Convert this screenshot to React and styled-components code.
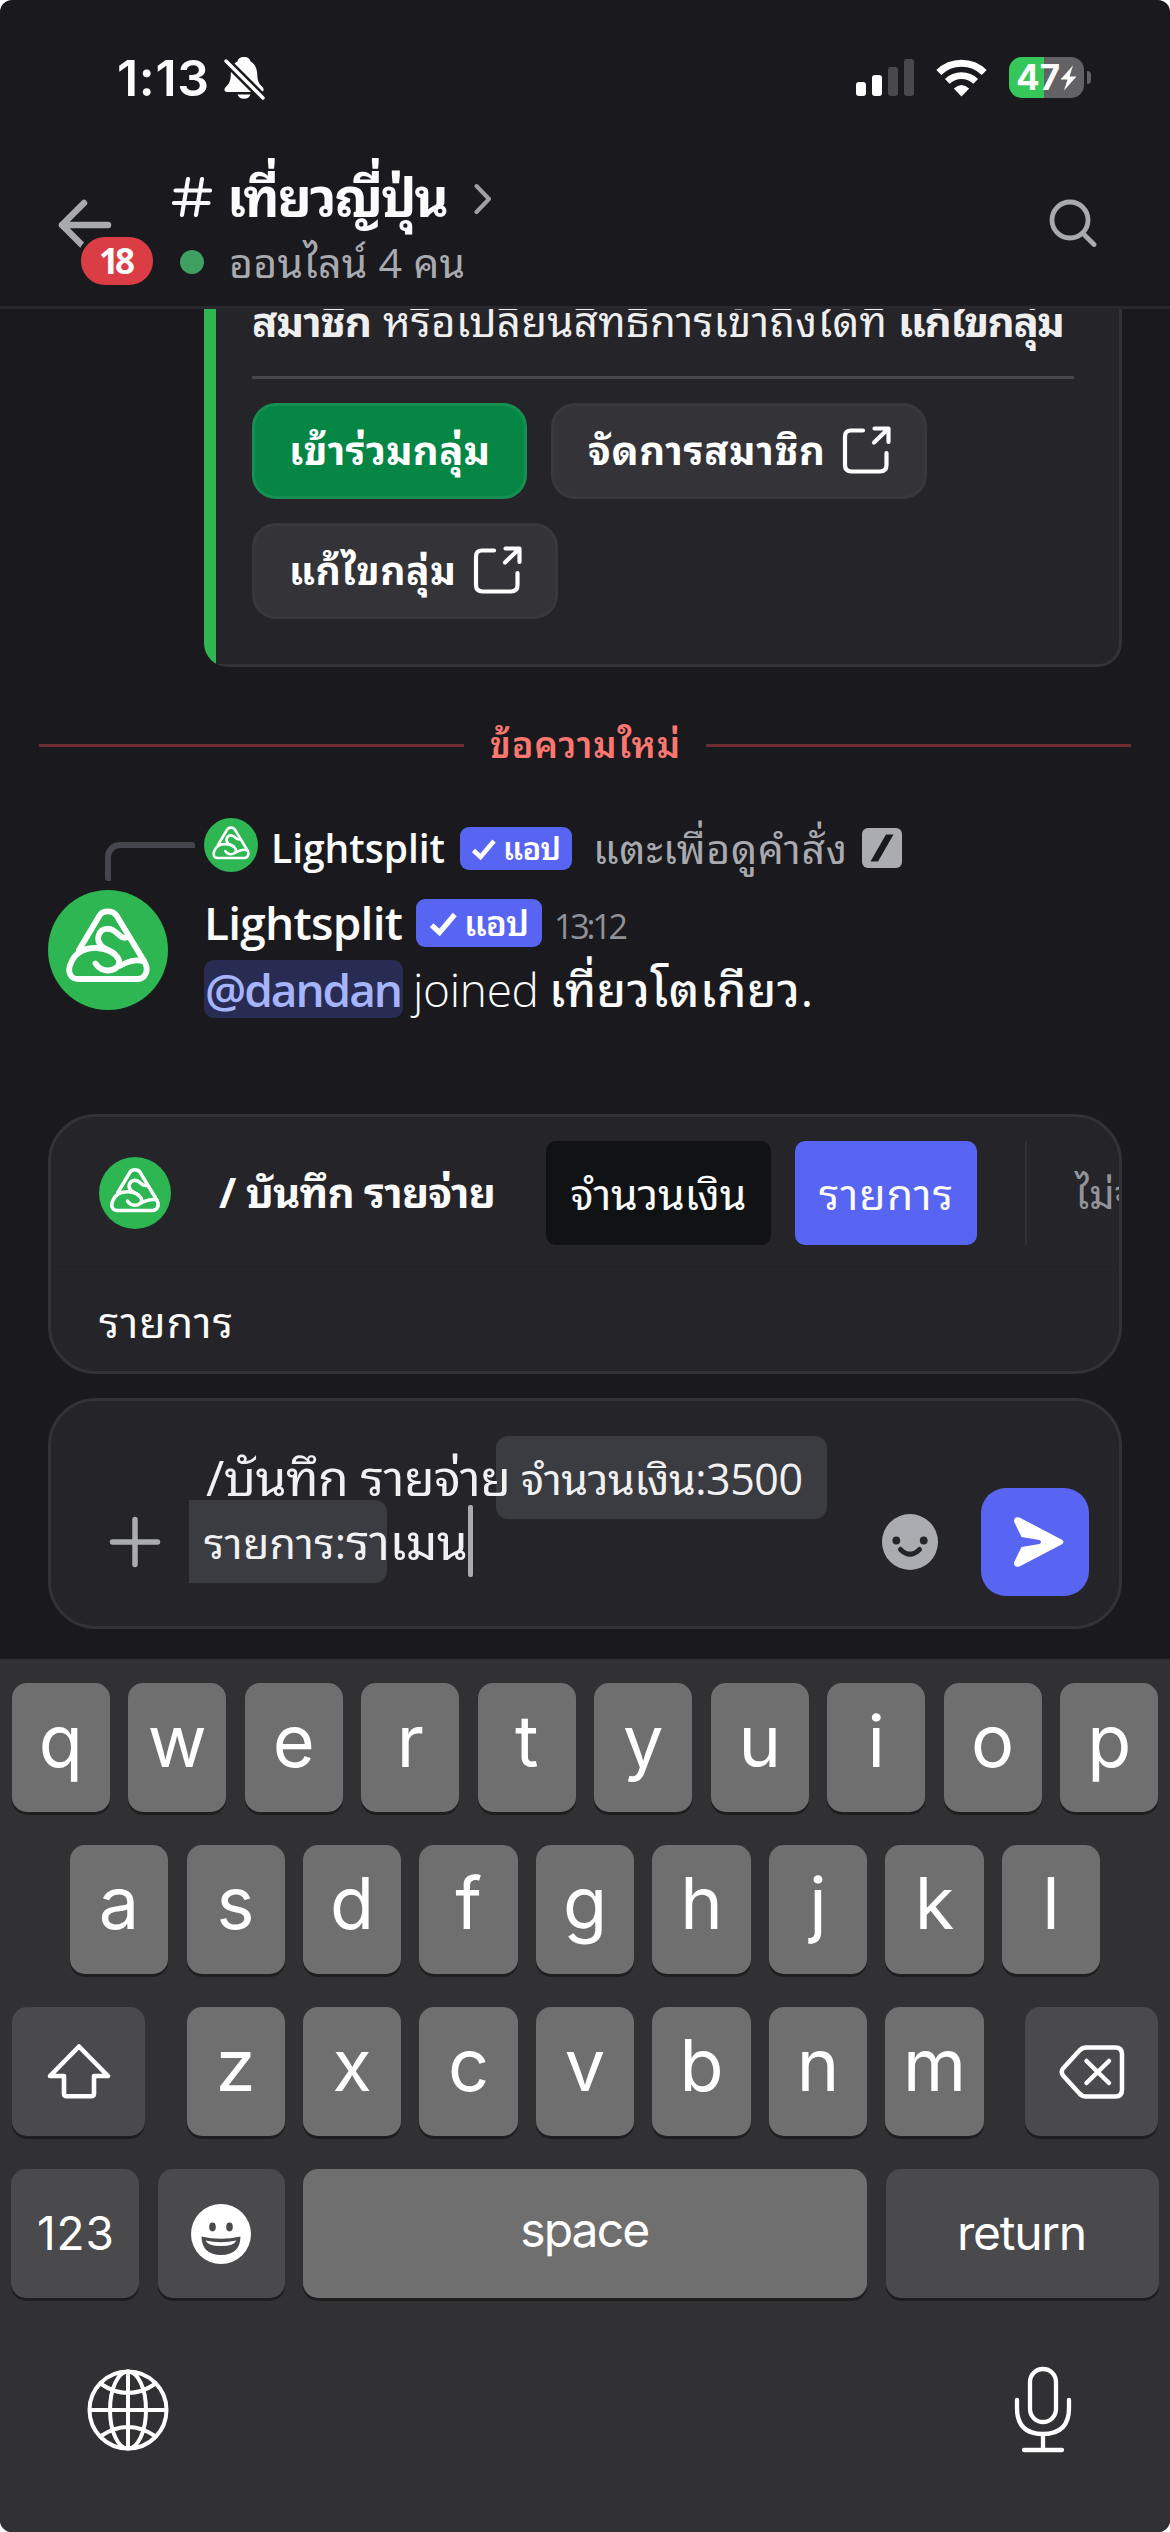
import React, { useLayoutEffect, useRef, useState } from "react";
import styled, { createGlobalStyle, css } from "styled-components";

const c = {
  bg: "#1a1a1e",
  panel: "#242429",
  line: "#323237",
  blurple: "#5865f2",
  text: "#fbfbfb",
  muted: "#a9aaaf",
  green: "#2db652",
};

const chatFont = `"Open Sans", "Noto Sans Thai Looped", "Loma", "Garuda", "Waree", "Umpush", "Noto Sans Thai", sans-serif`;
const systemFont = `Inter, "Noto Sans", sans-serif`;

const GlobalStyle = createGlobalStyle`
  *, *::before, *::after { box-sizing: border-box; }
  body { margin: 0; background: #fff; }
`;

const Screen = styled.main`
  width: 1170px;
  height: 2532px;
  display: flex;
  flex-direction: column;
  overflow: hidden;
  border-radius: 12px;
  background: ${c.bg};
  color: ${c.text};
  font-family: ${chatFont};
`;

const Label = styled.span`
  display: block;
  flex: none;
  white-space: nowrap;
  width: ${(p) => (p.$w ? `${p.$w}px` : "auto")};
  font-family: ${(p) => (p.$system ? systemFont : chatFont)};
  font-size: ${(p) => p.$size}px;
  font-weight: ${(p) => p.$weight || 400};
  line-height: ${(p) => p.$line || 60}px;
  color: ${(p) => p.$color || "inherit"};
  padding-top: ${(p) => p.$drop || 0}px;
  padding-bottom: ${(p) => p.$lift || 0}px;
  margin-left: ${(p) => p.$ml || 0}px;
`;

const Glyph = styled.span`
  display: flex;
  flex: none;
  margin-left: ${(p) => p.$ml || 0}px;
  padding-top: ${(p) => p.$drop || 0}px;
`;

/* Spreads a run of text evenly over a given width. */
function Text({ w, children, ...rest }) {
  const ref = useRef(null);
  const [spacing, setSpacing] = useState(0);
  useLayoutEffect(() => {
    if (!w) return;
    const el = ref.current;
    el.style.letterSpacing = "0px";
    const natural = el.getBoundingClientRect().width;
    el.style.letterSpacing = "10px";
    const count = Math.round((el.getBoundingClientRect().width - natural) / 10);
    setSpacing((w - natural) / Math.max(1, count - 1));
    el.style.letterSpacing = "";
  }, [w, children]);
  return (
    <Label $w={w} {...rest}>
      <span ref={ref} key={spacing} style={{ letterSpacing: `${spacing}px` }}>
        {children}
      </span>
    </Label>
  );
}

/* ---------- status bar ---------- */
const StatusBar = styled.div`
  height: 154px;
  flex: none;
  display: flex;
  align-items: center;
  padding: 1px 79px 0 117px;
`;
const StatusIcons = styled.div`
  margin-left: auto;
  display: flex;
  align-items: center;
`;
const Bars = styled.div`
  display: flex;
  align-items: flex-end;
  gap: 6px;
  height: 37px;
  margin-right: 22px;
`;
const Bar = styled.i`
  width: 10px;
  height: ${(p) => p.$h}px;
  border-radius: 3px;
  background: ${(p) => (p.$on ? "#fff" : "#49494c")};
`;
const Battery = styled.div`
  width: 75px;
  height: 41px;
  margin-left: 22px;
  border-radius: 13px;
  display: flex;
  align-items: center;
  padding-left: 7px;
  background: linear-gradient(90deg, #35c759 35px, #626265 35px);
`;
const BatteryCap = styled.i`
  width: 4px;
  height: 13px;
  margin-left: 3px;
  border-radius: 0 6px 6px 0;
  background: #626265;
`;

/* ---------- channel header ---------- */
const Header = styled.header`
  height: 155px;
  flex: none;
  display: flex;
  border-bottom: 3px solid #28282d;
`;
const Back = styled.div`
  position: relative;
  width: 172px;
  padding: 45px 0 0 58px;
`;
const Badge = styled.div`
  position: absolute;
  left: 77px;
  top: 79px;
  height: 56px;
  width: 80px;
  border: 4px solid ${c.bg};
  border-radius: 28px;
  background: #da3e44;
  display: flex;
  justify-content: center;
  align-items: center;
`;
const Titles = styled.div`
  flex: 1;
`;
const TitleRow = styled.div`
  display: flex;
  align-items: center;
  height: 80px;
  padding-top: 6px;
`;
const SubRow = styled.div`
  display: flex;
  align-items: center;
  height: 56px;
  padding-left: 8px;
`;
const Dot = styled.i`
  width: 24px;
  height: 24px;
  margin-right: 25px;
  border-radius: 50%;
  background: #40a061;
`;
const SearchSlot = styled.div`
  padding: 45px 73px 0 0;
`;

/* ---------- conversation ---------- */
const Chat = styled.section`
  height: 1350px;
  flex: none;
  display: flex;
  flex-direction: column;
  overflow: hidden;
`;
const Embed = styled.article`
  margin-left: 204px;
  width: 918px;
  height: 358px;
  flex: none;
  display: flex;
  overflow: hidden;
  border-radius: 0 0 24px 24px;
`;
const EmbedStripe = styled.i`
  width: 12px;
  background: ${c.green};
`;
const EmbedBody = styled.div`
  flex: 1;
  padding-left: 36px;
  background: ${c.panel};
  border: solid ${c.line};
  border-width: 0 3px 3px 0;
  border-radius: 0 0 24px 0;
`;
const EmbedLine = styled.div`
  display: flex;
  margin-top: -18px;
  height: 60px;
  color: #efeff0;
`;
const EmbedRule = styled.hr`
  width: 822px;
  height: 3px;
  margin: 25px 0 24px;
  border: 0;
  background: #46464b;
`;
const Buttons = styled.div`
  width: 840px;
  display: flex;
  flex-wrap: wrap;
  gap: 24px;
`;
const Button = styled.button`
  width: ${(p) => p.$w}px;
  height: 96px;
  padding: 0 0 2px 34px;
  display: flex;
  align-items: center;
  gap: 17px;
  border-radius: 24px;
  color: #fff;
  background: #333338;
  border: 3px solid #38383d;
  ${(p) =>
    p.$primary &&
    css`
      background: #058645;
      border-color: #168f50;
    `}
`;
const NewLine = styled.div`
  display: flex;
  align-items: center;
  height: 60px;
  flex: none;
  margin: 48px 39px 0;
  gap: 26px;
  &::before,
  &::after {
    content: "";
    flex: 1;
    height: 3px;
    background: #6c2b2e;
  }
`;
const Reply = styled.div`
  display: flex;
  align-items: flex-start;
  height: 72px;
  flex: none;
  margin-top: 43px;
`;
const Spine = styled.i`
  width: 90px;
  height: 39px;
  margin: 24px 9px 0 105px;
  border: solid #46464f;
  border-width: 6px 0 0 6px;
  border-radius: 15px 3px 3px 3px;
`;
const ReplyBody = styled.div`
  display: flex;
  align-items: center;
  height: 54px;
`;
const Tag = styled.div`
  width: ${(p) => p.$w}px;
  height: ${(p) => p.$h}px;
  margin-left: ${(p) => p.$ml}px;
  margin-top: ${(p) => p.$mt || 0}px;
  padding-left: ${(p) => p.$pl}px;
  border-radius: 9px;
  background: ${c.blurple};
  display: flex;
  align-items: center;
  gap: 7px;
  color: #fff;
`;
const Message = styled.div`
  display: flex;
  height: 224px;
  flex: none;
  padding-left: 48px;
  gap: 36px;
`;
const NameRow = styled.div`
  display: flex;
  align-items: center;
  height: 66px;
`;
const TextRow = styled.div`
  display: flex;
  align-items: center;
  height: 58px;
  margin-top: 4px;
`;
const Mention = styled.span`
  width: 199px;
  height: 58px;
  padding-left: 1px;
  border-radius: 10px;
  background: #292c52;
  color: #a6b5fb;
`;

/* ---------- slash command panel ---------- */
const Panel = styled.div`
  width: 1074px;
  height: ${(p) => p.$h}px;
  margin: 0 48px;
  flex: none;
  overflow: hidden;
  border: 3px solid ${c.line};
  border-radius: 48px;
  background: ${c.panel};
`;
const CommandRow = styled.div`
  display: flex;
  align-items: center;
  height: 153px;
  padding-left: 48px;
  border-bottom: 1px solid #27272c;
`;
const Option = styled.div`
  width: ${(p) => p.$w}px;
  height: 104px;
  flex: none;
  margin-left: ${(p) => p.$ml}px;
  border-radius: 10px;
  display: flex;
  align-items: center;
  justify-content: center;
  background: ${(p) => (p.$active ? c.blurple : "#111214")};
`;
const Separator = styled.i`
  width: 2px;
  height: 104px;
  flex: none;
  margin: 0 48px;
  background: #303035;
`;
const Hint = styled.div`
  padding: 22px 0 0 48px;
`;

/* ---------- composer ---------- */
const Composer = styled(Panel)`
  display: flex;
  margin-top: 24px;
`;
const PlusSlot = styled.div`
  width: 138px;
  padding: 115px 0 0 58px;
`;
const Field = styled.div`
  width: 670px;
  padding-top: 44px;
  color: #f1f1f2;
`;
const FieldLine = styled.div`
  display: flex;
  height: 64px;
  align-items: center;
`;
const Chip = styled.span`
  position: relative;
  margin-left: ${(p) => p.$ml}px;
  &::before {
    content: "";
    position: absolute;
    top: -10px;
    height: 83px;
    left: -${(p) => p.$padL}px;
    width: ${(p) => p.$w}px;
    border-radius: ${(p) => p.$radius};
    background: #3b3c41;
  }
`;
const Over = styled.span`
  position: relative;
  z-index: 1;
  display: flex;
`;
const Caret = styled.i`
  width: 5px;
  height: 72px;
  flex: none;
  border-radius: 2px;
  background: #ababad;
`;
const EmojiSlot = styled.div`
  width: 100px;
  padding: 113px 0 0 23px;
`;
const Send = styled.div`
  width: 108px;
  height: 108px;
  margin-top: 87px;
  margin-left: 22px;
  flex: none;
  border-radius: 25px;
  background: ${c.blurple};
`;

/* ---------- keyboard ---------- */
const Keyboard = styled.section`
  flex: 1;
  padding: 24px 12px 0;
  background: #313133;
`;
const KeyRow = styled.div`
  display: flex;
  justify-content: ${(p) => p.$justify || "center"};
  gap: 18.4px;
  height: 129px;
  margin-bottom: 33px;
`;
const KeyGroup = styled.div`
  display: flex;
  gap: 18.4px;
`;
const Key = styled.div`
  width: ${(p) => p.$w || 98.1}px;
  height: 129px;
  flex: none;
  display: flex;
  align-items: center;
  justify-content: center;
  border-radius: 15px;
  background: ${(p) => (p.$dark ? "#4a4a4c" : "#6f6f70")};
  box-shadow: 0 3px 0 #1e1e1f;
  color: #fff;
`;
const Letter = styled.span`
  font: 370 72px/129px ${systemFont};
  height: 129px;
  margin-top: -14px;
`;
const Footer = styled.div`
  display: flex;
  justify-content: space-between;
  align-items: center;
  height: 98px;
  padding: 0 86px 0 75px;
  margin-top: 63px;
`;

/* ---------- drawings ---------- */
const LogoSvg = styled.svg`
  flex: none;
`;
const Logo = ({ size }) => (
  <LogoSvg width={size} height={size} viewBox="0 0 120 120">
    <circle cx="60" cy="60" r="60" fill={c.green} />
    <g fill="none" stroke="#fff" strokeWidth="5.8" strokeLinecap="round" strokeLinejoin="round">
      <path d="M31 60 L51.5 25.5 C55 20 64.500 20 68.500 25.500 L96 71 C102 80 97 89 89.500 89 H30 C22 89 19 81 23 73 C27.500 61 39 57.500 49 58 C56 58.500 66 61 70.500 69 C73.500 76 66 80.800 59 80.500 C53 80 50 77.500 47.500 73.500" />
      <path d="M80 47 C72 51 70 39.500 60 38.600 C50 39 47 50 54 56.500 C57 59 63 61 66 63.500" />
      <path d="M71 76 C79 72.500 86 68.500 96 71.500" />
    </g>
  </LogoSvg>
);

const BellOff = () => (
  <svg width="41" height="44" viewBox="0 0 41 44">
    <path d="M20 0c-4 0-6 2-6.600 4.500C8.500 7 7 12 6.800 18c-.2 6-1.800 9-4.600 11.600C-.5 32 0 35 3 35h34c3 0 3.500-3 1-5.400-3-2.600-4.500-5.600-4.700-11.600C33 12 31.500 7 26.600 4.500 26 2 24 0 20 0zM13.500 37.500a6.800 6 0 0 0 13 0z" fill="#fff" />
    <path d="M1 3 L40 42" stroke={c.bg} strokeWidth="8.500" />
    <path d="M2 4 L39 41" stroke="#fff" strokeWidth="3.400" strokeLinecap="round" />
  </svg>
);

const Wifi = () => (
  <svg width="51" height="38" viewBox="0 0 51 38">
    <g fill="none" stroke="#fff">
      <path d="M2.800 13.600 A32.500 32.500 0 0 1 48.200 13.600" strokeWidth="7" />
      <path d="M11.300 22.400 A20.500 20.500 0 0 1 39.700 22.400" strokeWidth="6.800" />
    </g>
    <path d="M25.500 37.500 L17.800 29.600 Q25.500 22.500 33.200 29.600 Z" fill="#fff" />
  </svg>
);

const Bolt = () => (
  <svg width="17" height="26" viewBox="0 0 17 26">
    <path d="M13 .5 L.5 14.500 H7.500 L4 25.500 L16.500 11.500 H9.500 Z" fill="#fff" />
  </svg>
);

const BackArrow = () => (
  <svg width="54" height="52" viewBox="0 0 54 52" fill="none" stroke="#a9aaaf" strokeWidth="6.500" strokeLinecap="round" strokeLinejoin="round">
    <path d="M50 26 H4 M26 4 L4 26 L26 48" />
  </svg>
);

const Hash = () => (
  <svg width="40" height="42" viewBox="0 0 40 42" fill="none" stroke={c.text} strokeWidth="4.200" strokeLinecap="round">
    <path d="M16 3 L10 39 M30 3 L24 39 M3.500 14.500 H38 M2 27 H36.500" />
  </svg>
);

const Chevron = () => (
  <svg width="18" height="32" viewBox="0 0 18 32" fill="none" stroke="#9fa0a5" strokeWidth="4" strokeLinecap="round" strokeLinejoin="round">
    <path d="M2.500 3 L15 16 L2.500 29" />
  </svg>
);

const Search = () => (
  <svg width="48" height="48" viewBox="0 0 48 48" fill="none" stroke={c.muted} strokeWidth="4.800" strokeLinecap="round">
    <circle cx="21" cy="21" r="18" />
    <path d="M34.500 35 L45 45.500" />
  </svg>
);

const OpenOut = () => (
  <svg width="49" height="48" viewBox="0 0 49 48" fill="none" stroke="#fff" strokeWidth="4.200" strokeLinecap="round" strokeLinejoin="round">
    <path d="M21 4.500 H9 Q3 4.500 3 10.500 V39 Q3 45.500 9.500 45.500 H38 Q44.500 45.500 44.500 39 V27" />
    <path d="M32.500 2.500 H46.500 V16 M46 3 L32 16.500" />
  </svg>
);

const Check = ({ size }) => (
  <svg width={size} height={size} viewBox="0 0 24 24" fill="none" stroke="#fff" strokeWidth="4.600">
    <path d="M1.500 13.500 L8.500 20 L22 4" />
  </svg>
);

const SlashIcon = () => (
  <svg width="40" height="40" viewBox="0 0 40 40">
    <rect width="40" height="40" rx="6" fill="#abacb1" />
    <path d="M24 6.500 H31.500 L16 33.500 H8.500 Z" fill={c.bg} />
  </svg>
);

const Plus = () => (
  <svg width="52" height="52" viewBox="0 0 52 52" stroke="#abacb1" strokeWidth="5.500" strokeLinecap="round">
    <path d="M26 3.500 V48.500 M3.500 26 H48.500" />
  </svg>
);

const Smile = () => (
  <svg width="56" height="56" viewBox="0 0 56 56">
    <circle cx="28" cy="28" r="28" fill="#abacb1" />
    <circle cx="14.300" cy="26.500" r="3.900" fill={c.panel} />
    <circle cx="41.700" cy="26.500" r="3.900" fill={c.panel} />
    <path d="M18.500 35.500 Q28 45 37.500 35.500" fill="none" stroke={c.panel} strokeWidth="5" strokeLinecap="round" />
  </svg>
);

const SendArrow = () => (
  <svg width="108" height="108" viewBox="0 0 108 108">
    <path d="M38.500 29.500 L80.500 51.500 Q84.500 54 80.500 56.500 L38.500 78.500 Q33 80 33 74.500 L40.500 59 L58.500 56 Q61.500 54 58.500 52 L40.500 49 L33 33.500 Q33 28 38.500 29.500 Z" fill="#fff" />
  </svg>
);

const Shift = () => (
  <svg width="64" height="55" viewBox="0 0 64 55" fill="none" stroke="#fff" strokeWidth="4.600" strokeLinejoin="round">
    <path d="M32 2.500 L61 32 H47 V49.500 Q47 52.300 44 52.300 H20 Q17 52.300 17 49.500 V32 H3 Z" />
  </svg>
);

const Backspace = () => (
  <svg width="66" height="54" viewBox="0 0 66 54" fill="none" stroke="#fff" strokeWidth="4.500" strokeLinecap="round" strokeLinejoin="round">
    <path d="M27 2.500 H56 Q63 2.500 63 9 V45 Q63 51.500 56 51.500 H27 Q23 51.500 20 48 L4 30.500 Q1.500 27 4 23.500 L20 6 Q23 2.500 27 2.500 Z" />
    <path d="M27.500 16 L50 38 M50 16 L27.500 38" />
  </svg>
);

const Grin = () => (
  <svg width="60" height="60" viewBox="0 0 60 60">
    <circle cx="30" cy="30" r="30" fill="#fff" />
    <ellipse cx="21.500" cy="23" rx="3.300" ry="4.400" fill="#4a4a4c" />
    <ellipse cx="38.500" cy="23" rx="3.300" ry="4.400" fill="#4a4a4c" />
    <path d="M10.500 32.500 Q30 37 49.500 32.500 Q49 51 30 51 Q11 51 10.500 32.500 Z" fill="#4a4a4c" />
    <path d="M14.500 36.500 Q30 40 45.500 36.500 Q43 42 30 42 Q17 42 14.500 36.500 Z" fill="#fff" />
  </svg>
);

const Globe = () => (
  <svg width="82" height="82" viewBox="0 0 82 82" fill="none" stroke="#fff" strokeWidth="4">
    <circle cx="41" cy="41" r="38.500" />
    <ellipse cx="41" cy="41" rx="18" ry="38.500" />
    <path d="M41 2 V80 M2 41 H80 M14 15 Q41 33 68 15 M14 67 Q41 49 68 67" />
  </svg>
);

const Mic = () => (
  <svg width="58" height="88" viewBox="0 0 58 88" fill="none" stroke="#fff" strokeWidth="4.300" strokeLinecap="round">
    <rect x="16" y="3" width="26" height="53" rx="13" />
    <path d="M3 34 V42 Q3 68 29 68 Q55 68 55 42 V34 M29 68 V84 M10 84 H48" />
  </svg>
);

const letters = (row) =>
  row.split("").map((l) => (
    <Key key={l}>
      <Letter>{l}</Letter>
    </Key>
  ));

export default function App() {
  return (
    <>
      <GlobalStyle />
      <Screen>
        <StatusBar>
          <Text w={92} $size={50} $weight={600} $system>1:13</Text>
          <Glyph $ml={15} $drop={2}><BellOff /></Glyph>
          <StatusIcons>
            <Bars>
              <Bar $h={14} $on />
              <Bar $h={21} $on />
              <Bar $h={29} />
              <Bar $h={37} />
            </Bars>
            <Wifi />
            <Battery>
              <Text w={44} $size={35} $weight={700} $line={41} $system>47</Text>
              <Bolt />
            </Battery>
            <BatteryCap />
          </StatusIcons>
        </StatusBar>

        <Header>
          <Back>
            <BackArrow />
            <Badge>
              <Text w={36} $size={35} $weight={700} $line={48}>18</Text>
            </Badge>
          </Back>
          <Titles>
            <TitleRow>
              <Hash />
              <Text w={222} $size={53} $weight={700} $ml={15} $line={74}>เที่ยวญี่ปุ่น</Text>
              <Glyph $ml={25} $drop={4}><Chevron /></Glyph>
            </TitleRow>
            <SubRow>
              <Dot />
              <Text w={236} $size={41} $color={c.muted}>ออนไลน์ 4 คน</Text>
            </SubRow>
          </Titles>
          <SearchSlot><Search /></SearchSlot>
        </Header>

        <Chat>
          <Embed>
            <EmbedStripe />
            <EmbedBody>
              <EmbedLine>
                <Text w={120} $size={42} $weight={700}>สมาชิก</Text>
                <Text w={504} $size={42} $ml={11}>หรือเปลี่ยนสิทธิ์การเข้าถึงได้ที่</Text>
                <Text w={167} $size={42} $weight={700} $ml={11}>แก้ไขกลุ่ม</Text>
              </EmbedLine>
              <EmbedRule />
              <Buttons>
                <Button $w={275} $primary>
                  <Text w={201} $size={40} $weight={700}>เข้าร่วมกลุ่ม</Text>
                </Button>
                <Button $w={376}>
                  <Text w={237} $size={40} $weight={700}>จัดการสมาชิก</Text>
                  <OpenOut />
                </Button>
                <Button $w={306}>
                  <Text w={167} $size={39} $weight={700}>แก้ไขกลุ่ม</Text>
                  <OpenOut />
                </Button>
              </Buttons>
            </EmbedBody>
          </Embed>

          <NewLine>
            <Text w={190} $size={36} $weight={600} $lift={1} $color="#fc776f">ข้อความใหม่</Text>
          </NewLine>

          <Reply>
            <Spine />
            <ReplyBody>
              <Logo size={54} />
              <Text w={174} $size={39} $weight={600} $ml={13} $drop={6}>Lightsplit</Text>
              <Tag $w={112} $h={43} $ml={15} $mt={7} $pl={12}>
                <Check size={24} />
                <Text w={58} $size={31} $weight={600} $line={43}>แอป</Text>
              </Tag>
              <Text w={254} $size={41} $ml={21} $drop={6} $color={c.muted}>แตะเพื่อดูคำสั่ง</Text>
              <Glyph $ml={15} $drop={6}><SlashIcon /></Glyph>
            </ReplyBody>
          </Reply>

          <Message>
            <Logo size={120} />
            <div>
              <NameRow>
                <Text w={199} $size={46} $weight={600} $lift={3}>Lightsplit</Text>
                <Tag $w={126} $h={48} $ml={13} $pl={14}>
                  <Check size={27} />
                  <Text w={65} $size={35} $weight={600} $line={48}>แอป</Text>
                </Tag>
                <Text w={74} $size={34} $ml={12} $drop={6} $color="#919198">13:12</Text>
              </NameRow>
              <TextRow>
                <Mention>
                  <Text w={198} $size={46} $weight={650} $line={58}>@dandan</Text>
                </Mention>
                <Text w={126} $size={46} $weight={350} $ml={10}>joined</Text>
                <Text w={264} $size={47} $weight={500} $ml={10}>เที่ยวโตเกียว.</Text>
              </TextRow>
            </div>
          </Message>

          <Panel $h={260}>
            <CommandRow>
              <Logo size={72} />
              <Text w={277} $size={42} $weight={700} $ml={48} $lift={3}>/ บันทึก รายจ่าย</Text>
              <Option $w={225} $ml={50}>
                <Text w={176} $size={43} $drop={2}>จำนวนเงิน</Text>
              </Option>
              <Option $w={182} $ml={24} $active>
                <Text w={134} $size={43} $drop={2}>รายการ</Text>
              </Option>
              <Separator />
              <Label $size={40} $color="#93939a" $drop={2}>ไม่จำเป็น</Label>
            </CommandRow>
            <Hint>
              <Text w={134} $size={43}>รายการ</Text>
            </Hint>
          </Panel>

          <Composer $h={231}>
            <PlusSlot><Plus /></PlusSlot>
            <Field>
              <FieldLine>
                <Over><Text w={305} $size={50} $ml={17}>/บันทึก รายจ่าย</Text></Over>
                <Chip $ml={10} $padL={25} $w={331} $radius="12px">
                  <Over><Text w={282} $size={43} $weight={370} $drop={3}>จำนวนเงิน:3500</Text></Over>
                </Chip>
              </FieldLine>
              <FieldLine>
                <Chip $ml={15} $padL={15} $w={198} $radius="0 12px 12px 0">
                  <Over><Text w={142} $size={43} $drop={3}>รายการ:</Text></Over>
                </Chip>
                <Over><Text w={122} $size={50}>ราเมน</Text></Over>
                <Caret />
              </FieldLine>
            </Field>
            <EmojiSlot><Smile /></EmojiSlot>
            <Send><SendArrow /></Send>
          </Composer>
        </Chat>

        <Keyboard>
          <KeyRow>{letters("qwertyuiop")}</KeyRow>
          <KeyRow>{letters("asdfghjkl")}</KeyRow>
          <KeyRow $justify="space-between">
            <Key $w={133} $dark><Shift /></Key>
            <KeyGroup>{letters("zxcvbnm")}</KeyGroup>
            <Key $w={133} $dark><Backspace /></Key>
          </KeyRow>
          <KeyRow>
            <Key $w={128} $dark><Text w={77} $size={46} $weight={380} $lift={2} $system>123</Text></Key>
            <Key $w={127} $dark><Grin /></Key>
            <Key $w={564}><Text w={130} $size={48} $weight={380} $lift={8} $system>space</Text></Key>
            <Key $w={273} $dark><Text w={130} $size={48} $weight={380} $lift={1} $system>return</Text></Key>
          </KeyRow>
          <Footer>
            <Globe />
            <Mic />
          </Footer>
        </Keyboard>
      </Screen>
    </>
  );
}
